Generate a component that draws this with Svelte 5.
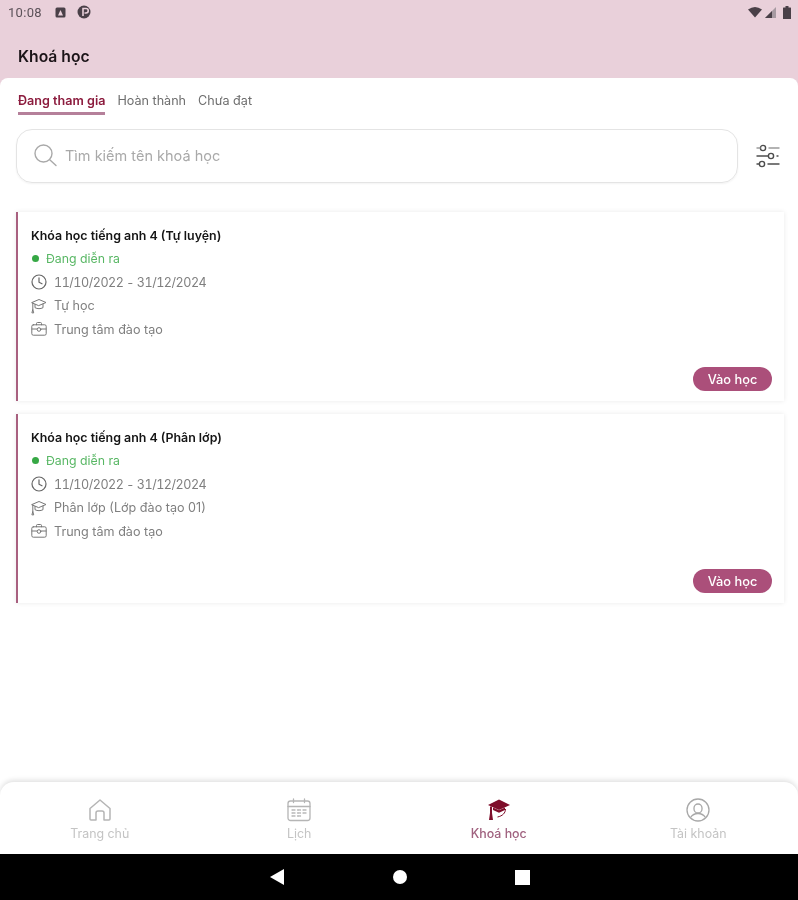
<script lang="ts">
    const tabs = ["Đang tham gia", "Hoàn thành", "Chưa đạt"];
    const courses = [
        { title: "Khóa học tiếng anh 4 (Tự luyện)", kind: "Tự học" },
        { title: "Khóa học tiếng anh 4 (Phân lớp)", kind: "Phân lớp (Lớp đào tạo 01)" },
    ];
</script>

<div class="screen">
    <header>
        <div class="status">
            <span class="time">10:08</span>
            <svg class="st-a" width="11" height="11" viewBox="0 0 11 11">
                <rect x="0.5" y="0.5" width="10" height="10" rx="1.5" fill="#4a4048" />
                <path d="M3 8.5 5.5 3 8 8.5Z" fill="#e9d0da" />
            </svg>
            <svg class="st-p" width="14" height="14" viewBox="0 0 14 14">
                <circle cx="7" cy="7" r="6.5" fill="#4a4048" />
                <path d="M6 11V3.5h3a2 2 0 0 1 0 4.5H7.5" fill="none" stroke="#e9d0da" stroke-width="1.6" />
            </svg>
            <span class="spacer"></span>
            <svg width="14" height="12" viewBox="0 0 14 12"><path d="M0 3.5Q7-1.5 14 3.5L7 11.5Z" fill="#4a4048" /></svg>
            <svg class="st-signal" width="12" height="12" viewBox="0 0 12 12">
                <path d="M0 12 11 1V12Z" fill="#a79aa2" />
                <path d="M0 12 7 5V12Z" fill="#4a4048" />
            </svg>
            <svg class="st-batt" width="8" height="13" viewBox="0 0 8 13">
                <path d="M2.500 0h3v1.500H7.500a.5.500 0 0 1 .5.500V13H0V2a.5.500 0 0 1 .5-.500h2Z" fill="#4a4048" />
            </svg>
        </div>
        <h1>Khoá học</h1>
    </header>

    <main>
        <nav class="tabs">
            {#each tabs as tab, i}
                <span class="tab" class:active={i === 0}>{tab}</span>
            {/each}
        </nav>

        <div class="search-row">
            <div class="search">
                <svg width="24" height="24" viewBox="0 0 24 24" fill="none" stroke="#a9a9a9" stroke-width="1.4" stroke-linecap="round">
                    <circle cx="10.500" cy="10.500" r="8.500" />
                    <path d="M17 17l6 5.500" />
                </svg>
                <span>Tìm kiếm tên khoá học</span>
            </div>
            <svg class="filter" width="24" height="24" viewBox="0 0 24 24" fill="none" stroke="#4d4d4d" stroke-width="1.4" stroke-linecap="round">
                <circle cx="7" cy="4" r="2.600" />
                <path d="M13 4h10M1 4h3" stroke="#9a9a9a" />
                <circle cx="15" cy="12" r="2.600" />
                <path d="M1 12h11M21 12h1" />
                <circle cx="6" cy="20" r="2.600" />
                <path d="M1 20h2M12 20h11" />
            </svg>
        </div>

        <div class="list">
            {#each courses as c}
                <article class="card">
                    <h2>{c.title}</h2>
                    <div class="state"><i></i><span>Đang diễn ra</span></div>
                    <div class="row">
                        <svg width="16" height="16" viewBox="0 0 16 16" fill="none" stroke="#666" stroke-width="1.200" stroke-linecap="round" stroke-linejoin="round">
                            <circle cx="8" cy="8" r="7" />
                            <path d="M8 3.800V8.300l3 1.500" />
                        </svg>
                        <span class="dates">11/10/2022 - 31/12/2024</span>
                    </div>
                    <div class="row">
                        <svg width="16" height="16" viewBox="0 0 16 16" fill="none" stroke="#777" stroke-width="1" stroke-linecap="round" stroke-linejoin="round">
                            <path d="M1 4.500 8 1.500l7 3-7 3Z" />
                            <path d="M4 6.500v3.200c2.500 1.300 5.500 1.300 8 0V6" />
                            <path d="M1.800 5v6.500M1 14.500l.8-3 .8 3Z" />
                        </svg>
                        <span>{c.kind}</span>
                    </div>
                    <div class="row">
                        <svg width="16" height="16" viewBox="0 0 16 16" fill="none" stroke="#777" stroke-width="1" stroke-linecap="round" stroke-linejoin="round">
                            <rect x="0.800" y="3.800" width="14.400" height="10.400" rx="1.500" />
                            <path d="M5.500 3.800V2.500a1 1 0 0 1 1-1h3a1 1 0 0 1 1 1v1.300M1 8h5M10 8h5" />
                            <circle cx="8" cy="8.500" r="1.800" />
                        </svg>
                        <span>Trung tâm đào tạo</span>
                    </div>
                    <button>Vào học</button>
                </article>
            {/each}
        </div>
    </main>

    <nav class="bottom">
        <div class="item">
            <svg width="24" height="24" viewBox="0 0 24 24" fill="none" stroke="#b5b5b5" stroke-width="1.500" stroke-linejoin="round">
                <path d="M2 10.500 12 2l10 8.500V21a1 1 0 0 1-1 1h-5v-7a2 2 0 0 0-2-2h-4a2 2 0 0 0-2 2v7H3a1 1 0 0 1-1-1Z" />
            </svg>
            <span>Trang chủ</span>
        </div>
        <div class="item">
            <svg width="24" height="24" viewBox="0 0 24 24" fill="none" stroke="#b5b5b5" stroke-width="1.300" stroke-linecap="round">
                <rect x="1" y="3" width="22" height="19.500" rx="2.500" />
                <path d="M1 8.500h22M6.500 1v3.500M17.500 1v3.500" />
                <path d="M5 12h3M10.500 12h3M16 12h3M5 15h3M10.500 15h3M16 15h3M5 18h3M10.500 18h3" stroke-dasharray="1.500 1" />
            </svg>
            <span>Lịch</span>
        </div>
        <div class="item active">
            <svg width="24" height="24" viewBox="0 0 24 24">
                <path d="M12 1.500 23 7l-11 5L1 7Z" fill="#7e0d2a" />
                <path d="M6 9.500v2.500l6 2.700 6-2.700V9.500l-6 2.800Z" fill="#7e0d2a" />
                <path d="M18.500 11c0 4-3 7-8 8" fill="none" stroke="#7e0d2a" stroke-width="1" />
                <path d="M3 8.500h2V15l1 7H2l1-7Z" fill="#7e0d2a" />
            </svg>
            <span>Khoá học</span>
        </div>
        <div class="item">
            <svg width="24" height="24" viewBox="0 0 24 24" fill="none" stroke="#a8a8a8" stroke-width="1.300">
                <circle cx="12" cy="12" r="11" />
                <rect x="8" y="6" width="8" height="9" rx="4" />
                <path d="M4.500 19.500c2-3 4.500-4 7.500-4s5.500 1 7.500 4" />
            </svg>
            <span>Tài khoản</span>
        </div>
    </nav>

    <footer>
        <svg width="16" height="18" viewBox="0 0 16 18"><path d="M15 1V17L1 9Z" fill="#fff" /></svg>
        <span class="dot"></span>
        <span class="square"></span>
    </footer>
</div>

<style>
    :global(body) {
        margin: 0;
        background: #fff;
    }

    .screen {
        width: 798px;
        height: 900px;
        display: flex;
        flex-direction: column;
        font-family: Inter, "Liberation Sans", sans-serif;
        background: #e9d0da;
        overflow: hidden;
        filter: blur(0.45px);
    }

    .status {
        height: 24px;
        padding: 0 7px 0 8px;
        display: flex;
        align-items: center;
        color: #5c5259;
        font-family: Roboto, sans-serif;
        font-size: 13px;
        letter-spacing: 0.3px;
    }

    .st-a {
        margin-left: 13px;
    }

    .st-p {
        margin-left: 11px;
    }

    .spacer {
        flex: 1;
    }

    .st-signal {
        margin-left: 3px;
    }

    .st-batt {
        margin-left: 6px;
    }

    header {
        height: 78px;
        flex: none;
    }

    h1 {
        margin: 22px 0 0 18px;
        font-size: 15.700px;
        line-height: 22px;
        font-weight: 600;
        color: #1b1418;
    }

    main {
        flex: 1;
        background: #fff;
        border-radius: 8px 8px 0 0;
        padding: 15px 14px 0 16px;
        min-height: 0;
    }

    .tabs {
        display: flex;
        gap: 12px;
        padding-left: 2px;
        font-size: 12.600px;
        line-height: 15px;
        color: #6e6e6e;
    }

    .tab {
        padding-bottom: 4px;
        border-bottom: 3px solid transparent;
    }

    .tab.active {
        color: #8c1c3e;
        font-weight: 600;
        border-bottom-color: #b5809a;
    }

    .search-row {
        margin-top: 14px;
        display: flex;
        align-items: center;
        gap: 18px;
    }

    .search {
        flex: none;
        box-sizing: border-box;
        width: 722px;
        height: 54px;
        padding: 0 0 2px 16px;
        border: 1px solid #e4e4e4;
        border-radius: 16px;
        box-shadow: 0 1px 2px rgba(0, 0, 0, 0.05);
        display: flex;
        align-items: center;
        gap: 8px;
        font-size: 14.500px;
        color: #a9a9a9;
    }

    .list {
        margin-top: 29px;
        display: flex;
        flex-direction: column;
        gap: 13px;
    }

    .card {
        position: relative;
        box-sizing: border-box;
        height: 189px;
        padding: 15px 12px 0 13px;
        border-left: 2px solid #a8607f;
        background: #fff;
        box-shadow: 0 0 5px rgba(0, 0, 0, 0.09);
    }

    h2 {
        margin: 0 0 2px;
        font-size: 12.400px;
        line-height: 18px;
        font-weight: 600;
        color: #151515;
    }

    .state,
    .row {
        height: 23.500px;
        display: flex;
        align-items: center;
        gap: 7px;
        font-size: 12.600px;
        color: #7f7f7f;
    }

    .dates {
        font-variant-numeric: tabular-nums;
        letter-spacing: -0.5px;
    }

    .state {
        color: #58b764;
        gap: 7px;
        font-size: 12.300px;
    }

    .state i {
        width: 7px;
        height: 7px;
        margin-left: 1px;
        border-radius: 50%;
        background: #36a845;
    }

    .row svg {
        flex: none;
    }

    button {
        position: absolute;
        right: 12px;
        bottom: 10px;
        width: 79px;
        height: 24px;
        padding: 1px 0 0;
        border: 0;
        border-radius: 12px;
        background: #ab4f7a;
        color: #fff;
        font-family: inherit;
        font-size: 12.800px;
        font-weight: 500;
    }

    .bottom {
        height: 72px;
        flex: none;
        background: #fff;
        border-radius: 14px 14px 0 0;
        box-shadow: 0 -2px 5px rgba(0, 0, 0, 0.12);
        display: grid;
        grid-template-columns: repeat(4, 1fr);
        position: relative;
        margin-top: -72px;
    }

    .item {
        padding-top: 16px;
        display: flex;
        flex-direction: column;
        align-items: center;
        gap: 4px;
        font-size: 12.400px;
        line-height: 15px;
        color: #c4c4c4;
    }

    .item.active {
        color: #a0627f;
        font-weight: 500;
    }

    footer {
        height: 46px;
        flex: none;
        background: #000;
        position: relative;
        display: flex;
        align-items: center;
        justify-content: center;
        gap: 108px;
        padding-left: 4px;
    }

    footer svg {
        margin-left: -4px;
    }

    .dot {
        width: 14px;
        height: 14px;
        border-radius: 50%;
        background: #fff;
    }

    .square {
        width: 15px;
        height: 15px;
        background: #fff;
    }
</style>
